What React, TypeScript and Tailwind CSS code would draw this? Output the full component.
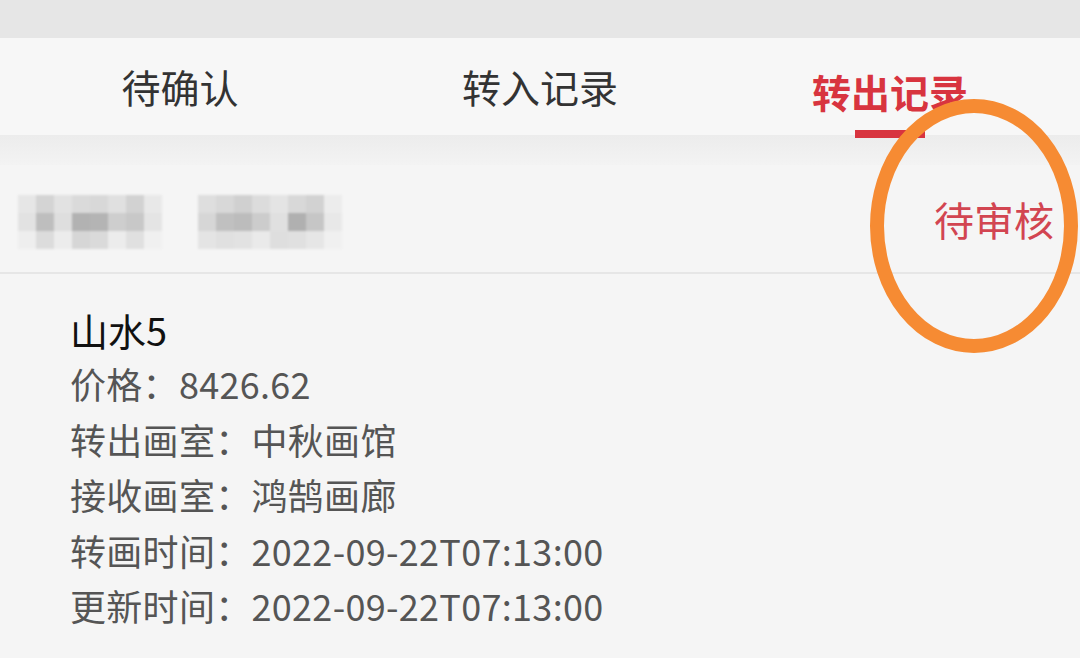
import React from "react";

const font = { fontFamily: '"Noto Sans CJK SC", "Noto Sans", sans-serif' };

// pixelated masked name, grey levels per cell
const maskA = [
  ["#e6e6e6", "#d4d4d4", "#e2e2e2", "#dadada", "#d8d8d8", "#e0e0e0", "#d2d2d2", "#e8e8e8"],
  ["#e2e2e2", "#bebebe", "#dedede", "#b2b2b2", "#b4b4b4", "#cecece", "#c8c8c8", "#e4e4e4"],
  ["#eeeeee", "#dcdcdc", "#ececec", "#d6d6d6", "#dadada", "#ececec", "#e0e0e0", "#f0f0f0"],
];
const maskB = [
  ["#dedede", "#d8d8d8", "#d0d0d0", "#dcdcdc", "#e4e4e4", "#d8d8d8", "#d2d2d2", "#ececec"],
  ["#d6d6d6", "#c0c0c0", "#bcbcbc", "#cccccc", "#e0e0e0", "#b0b0b0", "#c6c6c6", "#e8e8e8"],
  ["#e4e4e4", "#e0e0e0", "#e2e2e2", "#eaeaea", "#dedede", "#e0e0e0", "#e6e6e6", "#f0f0f0"],
];

function Mask({ cells }: { cells: string[][] }) {
  return (
    <div className="flex flex-col blur-[1px]">
      {cells.map((row, i) => (
        <div key={i} className="flex">
          {row.map((c, j) => (
            <div key={j} className="w-[18px] h-[18px]" style={{ background: c }} />
          ))}
        </div>
      ))}
    </div>
  );
}

const rows = [
  ["价格：", "8426.62"],
  ["转出画室：", "中秋画馆"],
  ["接收画室：", "鸿鹄画廊"],
  ["转画时间：", "2022-09-22T07:13:00"],
  ["更新时间：", "2022-09-22T07:13:00"],
];

export default function App() {
  return (
    <div className="relative w-[1080px] h-[658px] overflow-hidden bg-[#f5f5f5]" style={font}>
      <div className="h-[38px] bg-[#e6e6e6]" />

      {/* tabs */}
      <div className="grid grid-cols-3 h-[97px] bg-[#f7f7f7]">
        <div className="flex items-center justify-center text-[39px] text-[#333]">待确认</div>
        <div className="flex items-center justify-center text-[39px] text-[#333]">转入记录</div>
        <div className="flex flex-col items-center justify-end pr-[20px]">
          <span className="text-[39px] font-bold text-[#d8343f] leading-none mb-[19px]">转出记录</span>
          <div className="w-[70px] h-[8px] bg-[#d8343f] mb-[-3px]" />
        </div>
      </div>

      <div className="h-[30px] bg-gradient-to-b from-[#ececec] to-[#f3f3f3]" />

      {/* record header */}
      <div className="flex items-center justify-between h-[109px] pl-[18px] pr-[26px] border-b-2 border-[#e6e6e6]">
        <div className="flex items-center gap-[36px] mt-[6px]">
          <Mask cells={maskA} />
          <Mask cells={maskB} />
        </div>
        <span className="text-[40px] text-[#d24551]">待审核</span>
      </div>

      {/* detail */}
      <div className="flex flex-col pl-[70px] pt-[33px]">
        <div className="text-[38px] leading-[46px] text-[#111] mb-[3px]">山水5</div>
        {rows.map(([k, v]) => (
          <div key={k} className="flex text-[36px] leading-[55.5px] text-[#555] tracking-[0.3px]">
            <span>{k}</span>
            <span>{v}</span>
          </div>
        ))}
      </div>

      {/* annotation ring */}
      <svg className="absolute left-[860px] top-[92px]" width="220" height="270" viewBox="0 0 220 270">
        <ellipse cx="114" cy="134" rx="97" ry="120" fill="none" stroke="#f68b33" strokeWidth="14" />
      </svg>
    </div>
  );
}
